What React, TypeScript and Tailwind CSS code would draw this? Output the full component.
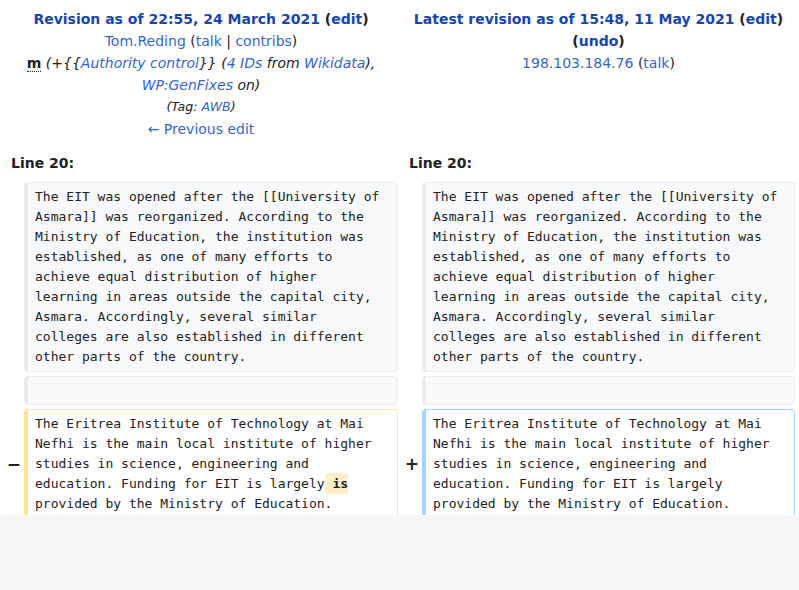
import React from 'react';

const link = "text-[#3366cc]";
const strongLink = "text-[#1646ad]";

const contextText =
  "The EIT was opened after the [[University of Asmara]] was reorganized. According to the Ministry of Education, the institution was established, as one of many efforts to achieve equal distribution of higher learning in areas outside the capital city, Asmara. Accordingly, several similar colleges are also established in different other parts of the country.";

const boxBase =
  "rounded-[4px] border border-l-4 py-1 pl-[7px] font-['DejaVu_Sans_Mono',monospace] text-[13px] leading-[20px] whitespace-pre-wrap break-words";

function Marker({ sign }: { sign?: string }) {
  return (
    <div className="flex items-center justify-end pr-[3px] text-[17px] font-bold leading-none">
      {sign}
    </div>
  );
}

export default function App() {
  return (
    <div className="h-[590px] bg-[#f6f6f6] font-['DejaVu_Sans',sans-serif] text-[#202122]">
      <div className="h-[515px] overflow-hidden bg-white">
        {/* revision headers */}
        <div className="flex pt-2 text-center text-[14px] leading-[22px]">
          <div className="ml-1 w-[394px]">
            <div className="font-bold">
              <span className={strongLink}>Revision as of 22:55, 24 March 2021</span> (
              <span className={strongLink}>edit</span>)
            </div>
            <div>
              <span className={link}>Tom.Reding</span> (<span className={link}>talk</span> |{' '}
              <span className={link}>contribs</span>)
            </div>
            <div>
              <abbr className="font-bold no-underline border-b border-dotted border-[#202122]">m</abbr>{' '}
              <span className="italic">
                (+{'{{'}<span className={link}>Authority control</span>{'}}'} (
                <span className={link}>4 IDs</span> from <span className={link}>Wikidata</span>),{' '}
                <span className={link}>WP:GenFixes</span> on)
              </span>
            </div>
            <div className="text-[12.5px] italic">
              (Tag: <span className={link}>AWB</span>)
            </div>
            <div className={link}>← Previous edit</div>
          </div>
          <div className="ml-1 w-[393px]">
            <div className="font-bold">
              <span className={strongLink}>Latest revision as of 15:48, 11 May 2021</span> (
              <span className={strongLink}>edit</span>) (<span className={strongLink}>undo</span>)
            </div>
            <div>
              <span className={link}>198.103.184.76</span> (<span className={link}>talk</span>)
            </div>
          </div>
        </div>

        {/* line numbers */}
        <div className="mt-3 flex text-[14px] font-bold leading-[22px]">
          <div className="ml-1 w-[394px] pl-[7px]">Line 20:</div>
          <div className="ml-1 w-[393px] pl-[7px]">Line 20:</div>
        </div>

        {/* diff rows */}
        <div className="mt-2 grid grid-cols-[24px_374px_24px_373px] gap-y-1">
          <Marker />
          <div className={`${boxBase} pr-[14px] border-[#eaecf0] bg-[#f8f9fa]`}>{contextText}</div>
          <Marker />
          <div className={`${boxBase} pr-[13px] border-[#eaecf0] bg-[#f8f9fa]`}>{contextText}</div>

          <Marker />
          <div className="h-[29px] rounded-[4px] border border-l-4 border-[#eaecf0] bg-[#f8f9fa]" />
          <Marker />
          <div className="h-[29px] rounded-[4px] border border-l-4 border-[#eaecf0] bg-[#f8f9fa]" />

          <Marker sign="−" />
          <div className={`${boxBase} pr-[14px] border-[#ffe49c] bg-white`}>
            {"The Eritrea Institute of Technology at Mai Nefhi is the main local institute of higher studies in science, engineering and education. Funding for EIT is largely"}
            <span className="rounded-[4px] bg-[#feeec8] py-[3px] font-bold">{" is"}</span>
            {" provided by the Ministry of Education."}
          </div>
          <Marker sign="+" />
          <div className={`${boxBase} pr-[13px] border-[#a3d3ff] bg-white`}>
            The Eritrea Institute of Technology at Mai Nefhi is the main local institute of higher studies in science, engineering and education. Funding for EIT is largely provided by the Ministry of Education.
          </div>
        </div>
      </div>
    </div>
  );
}
